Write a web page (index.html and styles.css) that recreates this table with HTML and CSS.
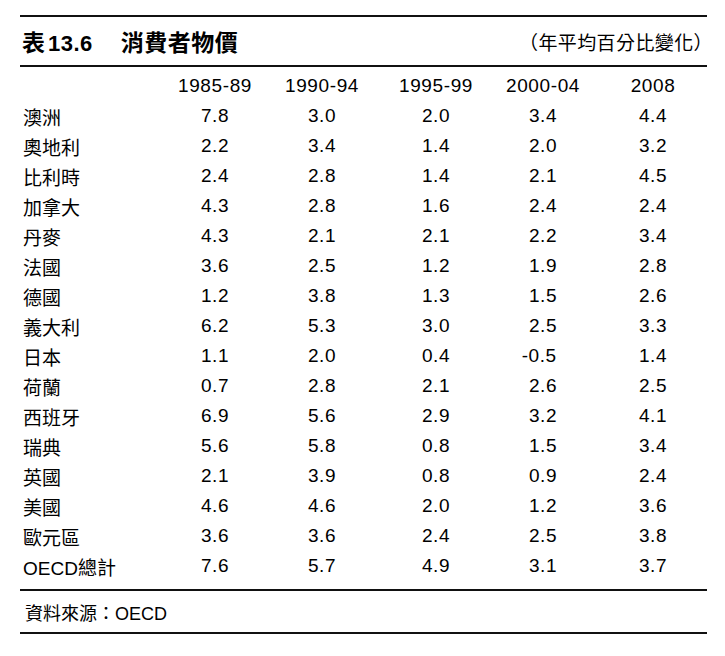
FILE: index.html
```html
<!DOCTYPE html>
<html lang="zh-Hant">
<head>
<meta charset="utf-8">
<title>表13.6 消費者物價</title>
<link rel="stylesheet" href="styles.css">
</head>
<body>
<div class="page">
  <div class="rule top"></div>
  <div class="titlebar">
    <h1 class="title"><span class="num">表<span class="no">13.6</span></span><span class="name">消費者物價</span></h1>
    <div class="unit">（年平均百分比變化）</div>
  </div>
  <div class="rule"></div>
  <div class="grid head">
    <div class="lab"></div><div>1985-89</div><div>1990-94</div><div>1995-99</div><div>2000-04</div><div>2008</div>
  </div>
  <div class="grid"><div class="lab">澳洲</div><div>7.8</div><div>3.0</div><div>2.0</div><div>3.4</div><div>4.4</div></div>
  <div class="grid"><div class="lab">奧地利</div><div>2.2</div><div>3.4</div><div>1.4</div><div>2.0</div><div>3.2</div></div>
  <div class="grid"><div class="lab">比利時</div><div>2.4</div><div>2.8</div><div>1.4</div><div>2.1</div><div>4.5</div></div>
  <div class="grid"><div class="lab">加拿大</div><div>4.3</div><div>2.8</div><div>1.6</div><div>2.4</div><div>2.4</div></div>
  <div class="grid"><div class="lab">丹麥</div><div>4.3</div><div>2.1</div><div>2.1</div><div>2.2</div><div>3.4</div></div>
  <div class="grid"><div class="lab">法國</div><div>3.6</div><div>2.5</div><div>1.2</div><div>1.9</div><div>2.8</div></div>
  <div class="grid"><div class="lab">德國</div><div>1.2</div><div>3.8</div><div>1.3</div><div>1.5</div><div>2.6</div></div>
  <div class="grid"><div class="lab">義大利</div><div>6.2</div><div>5.3</div><div>3.0</div><div>2.5</div><div>3.3</div></div>
  <div class="grid"><div class="lab">日本</div><div>1.1</div><div>2.0</div><div>0.4</div><div><span class="neg">-</span>0.5</div><div>1.4</div></div>
  <div class="grid"><div class="lab">荷蘭</div><div>0.7</div><div>2.8</div><div>2.1</div><div>2.6</div><div>2.5</div></div>
  <div class="grid"><div class="lab">西班牙</div><div>6.9</div><div>5.6</div><div>2.9</div><div>3.2</div><div>4.1</div></div>
  <div class="grid"><div class="lab">瑞典</div><div>5.6</div><div>5.8</div><div>0.8</div><div>1.5</div><div>3.4</div></div>
  <div class="grid"><div class="lab">英國</div><div>2.1</div><div>3.9</div><div>0.8</div><div>0.9</div><div>2.4</div></div>
  <div class="grid"><div class="lab">美國</div><div>4.6</div><div>4.6</div><div>2.0</div><div>1.2</div><div>3.6</div></div>
  <div class="grid"><div class="lab">歐元區</div><div>3.6</div><div>3.6</div><div>2.4</div><div>2.5</div><div>3.8</div></div>
  <div class="grid"><div class="lab">OECD總計</div><div>7.6</div><div>5.7</div><div>4.9</div><div>3.1</div><div>3.7</div></div>
  <div class="rule after"></div>
  <div class="source">資料來源：OECD</div>
  <div class="rule"></div>
</div>
</body>
</html>
```

FILE: styles.css
```css
html, body {
  margin: 0;
  padding: 0;
  background: #ffffff;
}
body {
  font-family: "Liberation Sans", "Noto Sans CJK TC", sans-serif;
  color: #000000;
}
.page {
  width: 687px;
  padding: 15px 0 0 20px;
}
.rule {
  height: 2px;
  background: #111111;
}
.titlebar {
  height: 48px;
  display: flex;
  align-items: center;
  justify-content: space-between;
}
.title {
  margin: 0 0 0 2px;
  font-size: 23px;
  font-weight: bold;
  display: flex;
  align-items: center;
}
.title .no {
  margin-left: 3px;
  font-size: 22px;
  letter-spacing: 0.5px;
}
.title .name {
  margin-left: 28px;
  letter-spacing: 0.5px;
}
.unit {
  font-size: 19px;
  letter-spacing: 0.4px;
  margin-right: -6px;
}
.grid {
  display: grid;
  grid-template-columns: 140px 110px 104px 124px 90px 130px;
  height: 30px;
  align-items: center;
  font-size: 19px;
  letter-spacing: 0.6px;
  text-align: center;
}
.grid.head {
  margin-top: 4px;
}
.grid .lab {
  text-align: left;
  padding-left: 3px;
  letter-spacing: 0;
}
.neg {
  margin-left: -0.4em;
}
.rule.after {
  margin-top: 8px;
}
.source {
  height: 41px;
  display: flex;
  align-items: center;
  padding-left: 5px;
  font-size: 18px;
}
```
